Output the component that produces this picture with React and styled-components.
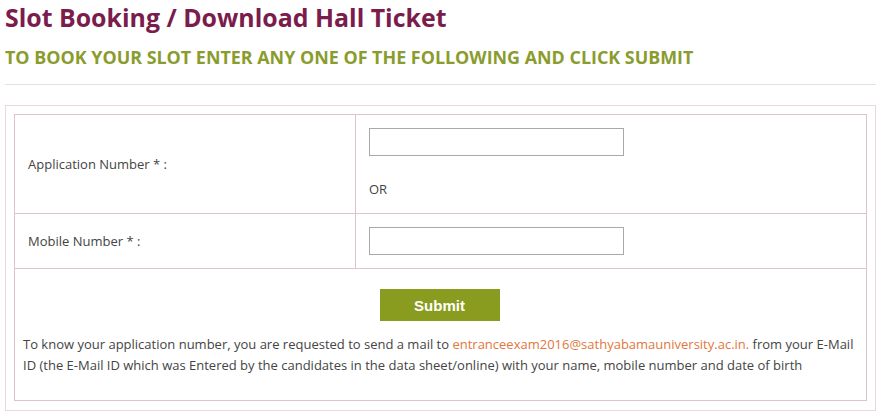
import React from 'react';
import styled, { createGlobalStyle } from 'styled-components';

const GlobalStyle = createGlobalStyle`
	html, body {
		margin: 0;
		padding: 0;
		background: #ffffff;
	}
	body {
		font-family: 'Open Sans', 'Liberation Sans', sans-serif;
		color: #444444;
	}
`;

const Page = styled.div`
	width: 885px;
	padding: 0 9px 0 5px;
	box-sizing: border-box;
`;

const Title = styled.h1`
	margin: 0;
	padding-top: 1px;
	font-size: 24.9px;
	line-height: 33px;
	font-weight: 700;
	color: #7a1c4c;
`;

const SubTitle = styled.h3`
	margin: 11px 0 0;
	font-size: 17.9px;
	line-height: 24px;
	font-weight: 700;
	color: #8a9c2e;
`;

const Rule = styled.hr`
	margin: 15px 0 20px;
	border: 0;
	border-top: 1px solid #e2e2e2;
`;

const Panel = styled.div`
	border: 1px solid #ecd6df;
	padding: 8px 8px 9px;
`;

const Table = styled.div`
	display: grid;
	grid-template-columns: 341px 1fr;
	border: 1px solid #dcc4ce;
`;

const LabelCell = styled.div`
	display: flex;
	align-items: center;
	height: ${({ h }) => h}px;
	padding-left: 13px;
	border-right: 1px solid #dcc4ce;
	border-bottom: 1px solid #dcc4ce;
	font-size: 13px;
	color: #444;
`;

const FieldCell = styled.div`
	height: ${({ h }) => h}px;
	padding: 13px 0 0 13px;
	box-sizing: border-box;
	border-bottom: 1px solid #dcc4ce;
	font-size: 13px;
	color: #444;
`;

const Input = styled.input`
	display: block;
	width: 255px;
	height: 28px;
	box-sizing: border-box;
	border: 1px solid #a9a9a9;
	background: #fff;
	margin: 0;
`;

const Or = styled.div`
	margin-top: 24px;
`;

const Footer = styled.div`
	grid-column: 1 / span 2;
	padding: 20px 10px 24px 8px;
	font-size: 13px;
	line-height: 21px;
	color: #444;
`;

const ButtonRow = styled.div`
	display: flex;
	justify-content: center;
	margin-bottom: 13px;
`;

const Submit = styled.button`
	width: 120px;
	height: 32px;
	border: 0;
	background: #8a9c1f;
	color: #fff;
	font-family: 'Liberation Sans', Arial, sans-serif;
	font-weight: 700;
	font-size: 15px;
`;

const Mail = styled.a`
	color: #e2773e;
	text-decoration: none;
`;

export default function App() {
	return (
		<Page>
			<GlobalStyle />
			<Title>Slot Booking / Download Hall Ticket</Title>
			<SubTitle>TO BOOK YOUR SLOT ENTER ANY ONE OF THE FOLLOWING AND CLICK SUBMIT</SubTitle>
			<Rule />
			<Panel>
				<Table>
					<LabelCell h={98}>Application Number * :</LabelCell>
					<FieldCell h={99}>
						<Input type="text" />
						<Or>OR</Or>
					</FieldCell>
					<LabelCell h={54}>Mobile Number * :</LabelCell>
					<FieldCell h={55}>
						<Input type="text" />
					</FieldCell>
					<Footer>
						<ButtonRow>
							<Submit>Submit</Submit>
						</ButtonRow>
						To know your application number, you are requested to send a mail to{' '}
						<Mail href="#">entranceexam2016@sathyabamauniversity.ac.in.</Mail> from your E-Mail ID (the
						E-Mail ID which was Entered by the candidates in the data sheet/online) with your name,
						mobile number and date of birth
					</Footer>
				</Table>
			</Panel>
		</Page>
	);
}
